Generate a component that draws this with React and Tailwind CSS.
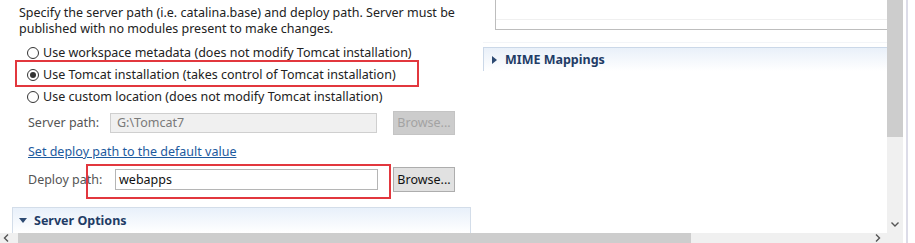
import React from "react";

const font = { fontFamily: '"Noto Sans", "Open Sans", sans-serif' };

function Radio({ checked, label }) {
  return (
    <div className="flex items-center h-[22px] pl-[27px]">
      <span className="w-[12px] h-[12px] rounded-full border border-[#333] bg-white flex items-center justify-center">
        {checked && <span className="w-[6px] h-[6px] rounded-full bg-[#333]" />}
      </span>
      <span className="ml-[4px] text-[#222]">{label}</span>
    </div>
  );
}

export default function App() {
  return (
    <div
      className="w-[915px] h-[243px] bg-white relative overflow-hidden flex flex-col text-[12.5px] leading-[16px]"
      style={font}
    >
      <div className="flex h-[233px]">
        {/* left panel */}
        <div className="w-[483px] flex flex-col relative">
          <div className="pl-[19px] pt-[5px] text-[#222]">
            <div>Specify the server path (i.e. catalina.base) and deploy path. Server must be</div>
            <div>published with no modules present to make changes.</div>
          </div>
          <div className="flex flex-col mt-[5px]">
            <Radio label="Use workspace metadata (does not modify Tomcat installation)" />
            <Radio checked label="Use Tomcat installation (takes control of Tomcat installation)" />
            <Radio label="Use custom location (does not modify Tomcat installation)" />
          </div>
          <div className="flex items-center h-[24px] mt-[3px]">
            <span className="pl-[28px] w-[110px] text-[#555]">Server path:</span>
            <div className="w-[267px] h-[20px] border border-[#cfcfcf] bg-[#f0f0f0] text-[#7a7a7a] pl-[6px] flex items-center">
              G:\Tomcat7
            </div>
            <div className="ml-[16px] w-[62px] h-[24px] bg-[#cccccc] border border-[#c4c4c4] text-[#a3a3a3] flex items-center justify-center">
              Browse...
            </div>
          </div>
          <div className="pl-[28px] mt-[8px] h-[18px] flex items-center">
            <span className="text-[#1d5a9e] underline">Set deploy path to the default value</span>
          </div>
          <div className="flex items-center h-[25px] mt-[6px]">
            <span className="pl-[28px] w-[115px] text-[#555]">Deploy path:</span>
            <div className="w-[263px] h-[21px] border border-[#b5b5b5] bg-white text-[#111] pl-[3px] flex items-center">
              webapps
            </div>
            <div className="ml-[15px] w-[62px] h-[25px] bg-[#e1e1e1] border border-[#adadad] text-[#111] flex items-center justify-center">
              Browse...
            </div>
          </div>
          <div className="ml-[12px] mt-[15px] w-[459px] flex-1 border-t border-l border-r border-[#d3dde9] bg-gradient-to-b from-[#e8f0fa] to-white flex items-center">
            <svg width="8" height="6" viewBox="0 0 8 6" className="ml-[6px]">
              <path d="M0 0 L8 0 L4 5 Z" fill="#2d4a72" />
            </svg>
            <span className="ml-[7px] font-bold text-[#1f3c66] text-[12.5px]">Server Options</span>
          </div>

          {/* annotation boxes */}
          <div className="absolute left-[15px] top-[60px] w-[404px] h-[27px] border-2 border-[#e2373e]" />
          <div className="absolute left-[86px] top-[164px] w-[305px] h-[35px] border-2 border-[#e2373e]" />
        </div>

        {/* right panel */}
        <div className="w-[404px] flex flex-col">
          <div className="ml-[12px] h-[30px] border-l border-b border-[#bdbdbd] flex flex-col">
            <div className="h-[20px] border-b border-[#f0f0f0]" />
          </div>
          <div className="h-[13px] border-b border-[#f3f5f8]" />
          <div className="mt-[4px] h-[24px] border-t border-l border-[#cbd8e8] bg-gradient-to-b from-[#e9f0f9] to-white flex items-center">
            <svg width="5" height="8" viewBox="0 0 5 8" className="ml-[8px]">
              <path d="M0 0 L5 4 L0 8 Z" fill="#2d4a72" />
            </svg>
            <span className="ml-[8px] font-bold text-[#1f3c66] text-[12.5px]">MIME Mappings</span>
          </div>
        </div>

        {/* vertical scrollbar */}
        <div className="w-[16px] bg-[#f0f0f0] flex flex-col">
          <div className="h-[137px] bg-[#cdcdcd]" />
          <div className="flex-1" />
          <div className="h-[18px] flex items-center justify-center">
            <svg width="8" height="5" viewBox="0 0 8 5">
              <path d="M0.5 0.5 L4 4 L7.5 0.5" stroke="#555" strokeWidth="1.4" fill="none" />
            </svg>
          </div>
        </div>
        <div className="w-[3px] bg-white" />
        <div className="w-[2px] bg-[#dcdce8]" />
        <div className="flex-1 bg-white" />
      </div>

      {/* horizontal scrollbar */}
      <div className="h-[10px] flex">
        <div className="w-[887px] bg-[#f0f0f0] flex items-center">
          <svg width="6" height="8" viewBox="0 0 6 8" className="ml-[3px]">
            <path d="M5 0.5 L1.5 4 L5 7.5" stroke="#555" strokeWidth="1.4" fill="none" />
          </svg>
          <div className="ml-[9px] w-[673px] h-[10px] bg-[#cdcdcd]" />
          <div className="flex-1" />
          <svg width="6" height="8" viewBox="0 0 6 8" className="mr-[6px]">
            <path d="M1 0.5 L4.5 4 L1 7.5" stroke="#555" strokeWidth="1.4" fill="none" />
          </svg>
        </div>
        <div className="w-[16px] bg-[#f0f0f0]" />
        <div className="w-[3px] bg-white" />
        <div className="w-[2px] bg-[#dcdce8]" />
        <div className="flex-1 bg-white" />
      </div>
    </div>
  );
}
